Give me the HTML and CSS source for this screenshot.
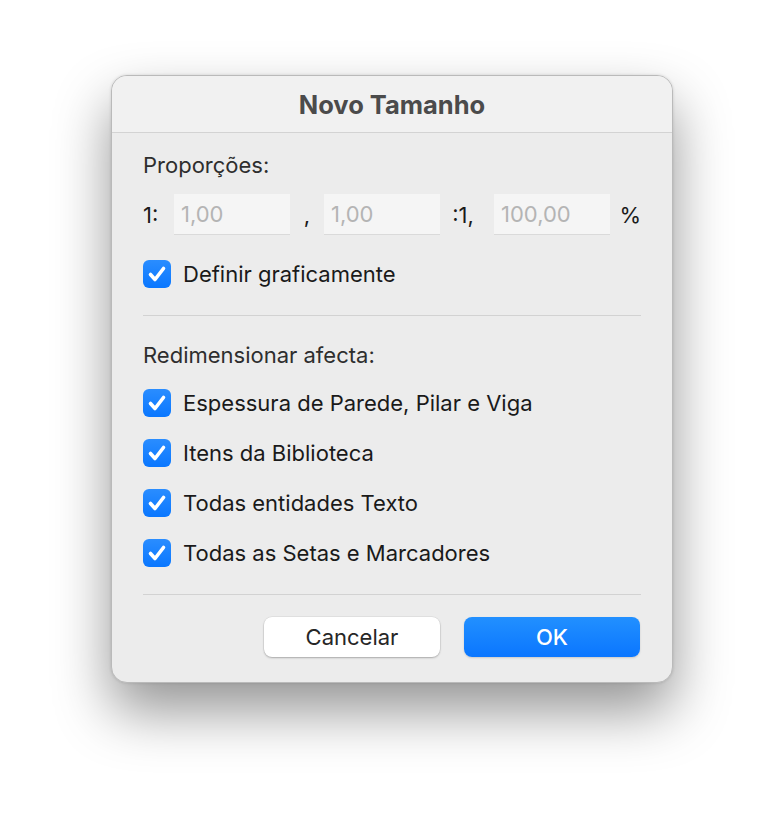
FILE: index.html
```html
<!DOCTYPE html>
<html lang="pt">
  <head>
    <meta charset="UTF-8" />
    <meta name="viewport" content="width=device-width, initial-scale=1.0" />
    <title>Novo Tamanho</title>
    <link rel="stylesheet" href="styles.css">
  </head>
  <body>
    <div class="dialog">
      <div class="dialog__title">Novo Tamanho</div>

      <div class="dialog__body">
        <div class="row row--label">Proporções:</div>

        <div class="ratio">
          <span class="ratio__text ratio__text--left">1:</span>
          <input class="ratio__input" type="text" placeholder="1,00" />
          <span class="ratio__text">,</span>
          <input class="ratio__input" type="text" placeholder="1,00" />
          <span class="ratio__text ratio__text--mid">:1,</span>
          <input class="ratio__input" type="text" placeholder="100,00" />
          <span class="ratio__text ratio__text--right">%</span>
        </div>

        <label class="check check--first">
          <span class="check__box">
            <svg viewBox="0 0 28 28" width="28" height="28"><path d="M7.5 14.5 L12 19.5 L20.5 8.5" /></svg>
          </span>
          Definir graficamente
        </label>

        <div class="divider"></div>

        <div class="row row--label row--section">Redimensionar afecta:</div>

        <label class="check">
          <span class="check__box">
            <svg viewBox="0 0 28 28" width="28" height="28"><path d="M7.5 14.5 L12 19.5 L20.5 8.5" /></svg>
          </span>
          Espessura de Parede, Pilar e Viga
        </label>
        <label class="check">
          <span class="check__box">
            <svg viewBox="0 0 28 28" width="28" height="28"><path d="M7.5 14.5 L12 19.5 L20.5 8.5" /></svg>
          </span>
          Itens da Biblioteca
        </label>
        <label class="check">
          <span class="check__box">
            <svg viewBox="0 0 28 28" width="28" height="28"><path d="M7.5 14.5 L12 19.5 L20.5 8.5" /></svg>
          </span>
          Todas entidades Texto
        </label>
        <label class="check">
          <span class="check__box">
            <svg viewBox="0 0 28 28" width="28" height="28"><path d="M7.5 14.5 L12 19.5 L20.5 8.5" /></svg>
          </span>
          Todas as Setas e Marcadores
        </label>

        <div class="divider divider--bottom"></div>

        <div class="buttons">
          <button class="btn btn--cancel" type="button">Cancelar</button>
          <button class="btn btn--ok" type="button">OK</button>
        </div>
      </div>
    </div>
  </body>
</html>
```

FILE: styles.css
```css
* {
  box-sizing: border-box;
}

html,
body {
  background-color: #ffffff;
}

body {
  margin: 0;
  min-height: 830px;
  padding: 75px 0 0 111px;
  font-family: Inter, "Liberation Sans", Arial, sans-serif;
  color: #1a1a1a;
}

.dialog {
  width: 562px;
  height: 608px;
  background-color: #ececec;
  border: 1px solid #bababa;
  border-radius: 16px;
  box-shadow: 0 28px 56px rgba(0, 0, 0, 0.42), 0 0 3px rgba(0, 0, 0, 0.14);
  overflow: hidden;
}

.dialog__title {
  height: 57px;
  display: flex;
  align-items: center;
  justify-content: center;
  background-color: #f1f1f1;
  border-bottom: 1px solid #d3d3d3;
  font-size: 25.5px;
  font-weight: 700;
  color: #4b4b4b;
  padding-top: 1px;
}

.dialog__body {
  padding: 20px 31px 0 31px;
}

.row {
  height: 24px;
  display: flex;
  align-items: center;
  font-size: 22px;
}

.row--label {
  color: #2e2e2e;
}

.row--section {
  margin-top: 27px;
}

.ratio {
  display: grid;
  grid-template-columns: 31px 116px 34px 116px 54px 116px 1fr;
  align-items: center;
  height: 41px;
  margin-top: 17px;
  font-size: 22px;
}

.ratio__text {
  text-align: center;
}

.ratio__text--left {
  text-align: left;
}

.ratio__text--mid {
  padding-right: 8px;
}

.ratio__text--right {
  text-align: right;
}

.ratio__input {
  height: 41px;
  width: 100%;
  border: none;
  border-bottom: 1px solid #dadada;
  background-color: #f5f5f5;
  padding: 0 7px;
  font-family: inherit;
  font-size: 22px;
  outline: none;
}

.ratio__input::placeholder {
  color: #b4b4b4;
}

.check {
  height: 28px;
  display: flex;
  align-items: center;
  gap: 12px;
  margin-top: 22px;
  font-size: 22px;
}

.check--first {
  margin-top: 25px;
}

.check__box {
  width: 28px;
  height: 28px;
  border-radius: 6px;
  background: linear-gradient(#2a8dff, #0a77ff);
  display: flex;
  flex-shrink: 0;
}

.check__box path {
  fill: none;
  stroke: #ffffff;
  stroke-width: 3.6;
  stroke-linecap: round;
  stroke-linejoin: round;
}

.divider {
  height: 1px;
  background-color: #d2d2d2;
  margin-top: 27px;
}

.divider--bottom {
  margin-top: 27px;
}

.buttons {
  display: flex;
  justify-content: flex-end;
  gap: 24px;
  margin-top: 22px;
  padding-right: 1px;
}

.btn {
  width: 176px;
  height: 40px;
  border: none;
  border-radius: 8px;
  font-family: inherit;
  font-size: 22px;
  cursor: pointer;
}

.btn--cancel {
  background-color: #ffffff;
  color: #262626;
  box-shadow: 0 1px 2px rgba(0, 0, 0, 0.25), 0 0 0 0.5px rgba(0, 0, 0, 0.08);
}

.btn--ok {
  background: linear-gradient(#2290ff, #0a76ff);
  color: #ffffff;
  font-weight: 500;
  box-shadow: 0 1px 2px rgba(0, 0, 0, 0.15);
}
```
